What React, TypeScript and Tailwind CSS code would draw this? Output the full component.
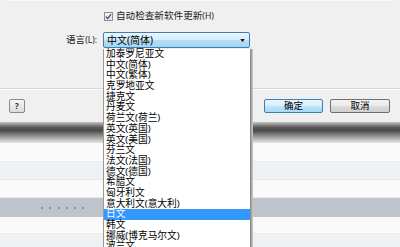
import { useState } from "react";

const languages = [
  "加泰罗尼亚文",
  "中文(简体)",
  "中文(繁体)",
  "克罗地亚文",
  "捷克文",
  "丹麦文",
  "荷兰文(荷兰)",
  "英文(英国)",
  "英文(美国)",
  "芬兰文",
  "法文(法国)",
  "德文(德国)",
  "希腊文",
  "匈牙利文",
  "意大利文(意大利)",
  "日文",
  "韩文",
  "挪威(博克马尔文)",
  "波兰文",
];

const font = "font-['Noto_Sans','Noto_Sans_CJK_SC',sans-serif]";

function App() {
  const [selected] = useState("日文");

  return (
    <div className={`relative w-[400px] h-[247px] overflow-hidden bg-[#f0f0f0] text-black ${font}`}>
      {/* dialog ============================ */}
      <div className="h-[122px] flex flex-col bg-[#f0f0f0]">
        <div className="h-[88px] flex flex-col">
          <div className="h-px mx-2 bg-[#fafafa]" />

          <div className="mt-[10px] h-[10px] flex items-center pl-[104px]">
            <div className="size-[9px] border border-[#8e8f8f] bg-[linear-gradient(#f4f4f4,#e2e2e2)] flex items-center justify-center">
              <svg viewBox="0 0 8 8" className="size-[7px]">
                <path d="M1 4.2 L3 6.3 L7 1.2" fill="none" stroke="#2a4f86" strokeWidth="1.4" />
              </svg>
            </div>
            <span className="ml-[3px] text-[9.6px] leading-[10px] text-[#1a1a1a]">
              自动检查新软件更新<span className="text-[8.5px]">(H)</span>
            </span>
          </div>

          <div className="mt-[11px] h-[16px] flex items-center">
            <div className="w-[103px] pr-[6px] text-right text-[9.6px] leading-[16px] text-[#1a1a1a]">
              语言<span className="text-[8.5px]">(L):</span>
            </div>
            <div className="relative w-[147px] h-[16px]">
              <div className="h-full flex items-center justify-between pl-[3px] pr-[4px] rounded-[2px] border border-[#3c7fb1] bg-[linear-gradient(#edf7fd_0%,#d3ecfa_50%,#b6dff6_51%,#a5d6f3_100%)]">
                <span className="text-[10px] leading-[12px]">中文(简体)</span>
                <svg viewBox="0 0 6 4" className="w-[5px] h-[3px]">
                  <path d="M0 0 H6 L3 4 Z" fill="#111" />
                </svg>
              </div>

              {/* dropdown list */}
              <div className="absolute left-0 top-[16.5px] z-10 w-[150px] flex">
                <div className="w-[147px] bg-white border-l border-[#9a9a9a] pt-[0.5px]">
                  {languages.map((lang) => (
                    <div
                      key={lang}
                      className={`h-[10.7px] pl-[2px] text-[9.7px] leading-[10.7px] whitespace-nowrap ${
                        lang === selected ? "bg-[#3399ff] text-white" : "text-black"
                      }`}
                    >
                      {lang}
                    </div>
                  ))}
                </div>
                <div className="w-[3px] bg-[linear-gradient(90deg,#7c7c7c,#a8a8a8,#cfcfcf)]" />
              </div>
            </div>
          </div>
        </div>

        <div className="h-px bg-[#d6d6d6]" />
        <div className="h-px bg-[#fbfbfb]" />

        <div className="flex-1 flex items-start pt-[9px] pl-[9px] pr-[10px]">
          <button className="w-[16px] h-[14px] rounded-[2px] border border-[#8a8a8a] bg-[linear-gradient(#f6f6f6,#dcdcdc)] text-[8px] leading-[12px] font-bold text-[#333]">
            ?
          </button>
          <div className="flex-1" />
          <button className="w-[59px] h-[14px] rounded-[2px] border border-[#3c7fb1] bg-[linear-gradient(#eaf6fd_0%,#d9f0fc_50%,#bee6fd_51%,#a7d9f5_100%)] text-[9.5px] leading-[12px]">
            确定
          </button>
          <button className="ml-[7px] w-[60px] h-[14px] rounded-[2px] border border-[#707070] bg-[linear-gradient(#f2f2f2_0%,#ebebeb_50%,#dddddd_51%,#cfcfcf_100%)] text-[9.5px] leading-[12px]">
            取消
          </button>
        </div>
      </div>

      {/* background window ============================ */}
      <div className="h-[21px] bg-[linear-gradient(#c4c4c4_0%,#5a5a5a_25%,#4a4a4a_40%,#9a9a9a_70%,#e4e7ea_100%)]" />
      <div className="flex flex-col">
        <div className="h-[19px] bg-[#fafafa] border-b border-[#ececec]" />
        <div className="h-[18px] bg-[#eff2f5] border-b border-[#e6e8ea]" />
        <div className="h-[18px] bg-[#fafafa] border-b border-[#e6e8ea]" />
        <div className="h-[19px] bg-[#c0c4cd] flex items-center gap-[6.3px] pl-[41px]">
          {[0, 1, 2, 3, 4, 5].map((i) => (
            <span key={i} className="w-[2px] h-[2px] bg-[#8d939c]" />
          ))}
        </div>
        <div className="h-[17px] bg-[#fafafa] border-b border-[#ececec]" />
        <div className="h-[20px] bg-[#eff2f5]" />
      </div>
    </div>
  );
}

export default App;
